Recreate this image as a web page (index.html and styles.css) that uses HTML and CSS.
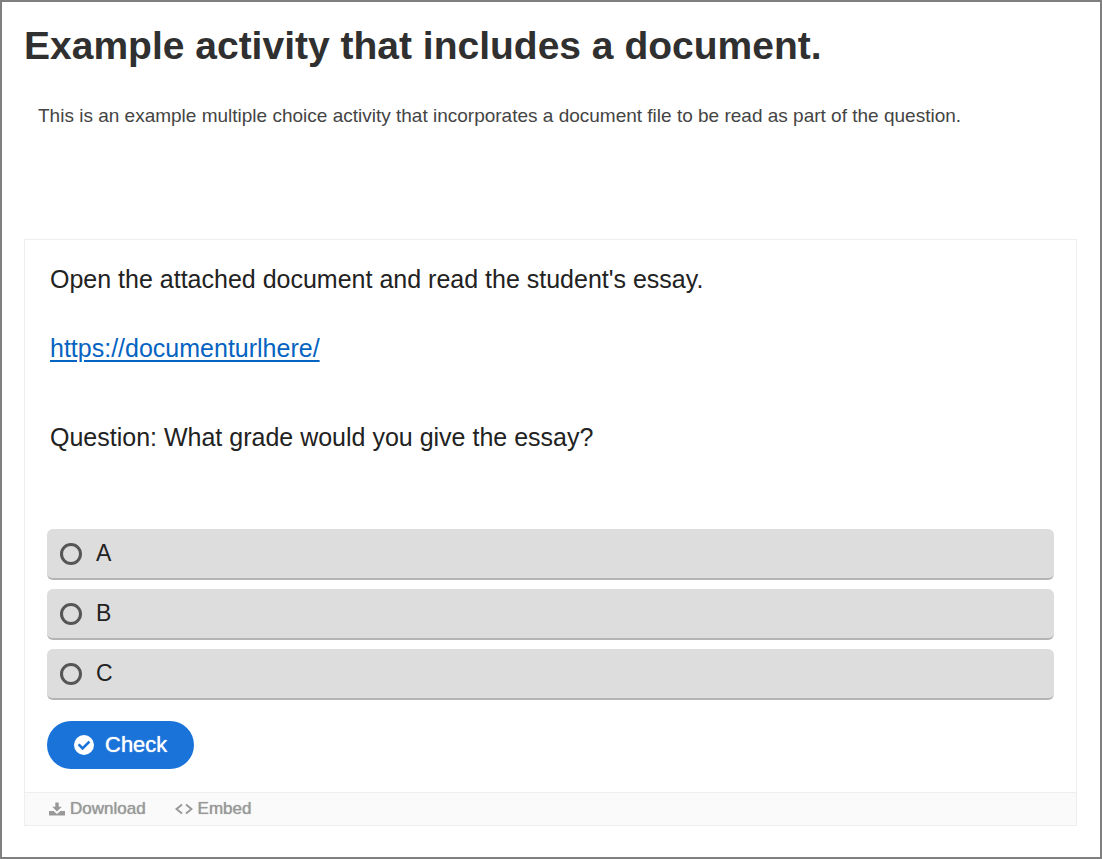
FILE: index.html
```html
<!DOCTYPE html>
<html lang="en">

<head>
    <meta charset="UTF-8">
    <meta name="viewport" content="width=device-width, initial-scale=1.0">
    <title>Example activity that includes a document.</title>
    <link rel="stylesheet" href="styles.css">
</head>

<body>
    <main class="page">
        <h1>Example activity that includes a document.</h1>
        <p class="intro">This is an example multiple choice activity that incorporates a document file to be read as part of the question.</p>

        <section class="activity">
            <form class="question" onsubmit="return false">
                <p class="task">Open the attached document and read the student's essay.</p>
                <p class="task-link"><a href="https://documenturlhere/">https://documenturlhere/</a></p>
                <p class="task" id="question-text">Question: What grade would you give the essay?</p>

                <div class="answers" role="radiogroup" aria-labelledby="question-text">
                    <label class="answer" for="answer-a">
                        <input type="radio" id="answer-a" name="grade" value="A">
                        <span>A</span>
                    </label>
                    <label class="answer" for="answer-b">
                        <input type="radio" id="answer-b" name="grade" value="B">
                        <span>B</span>
                    </label>
                    <label class="answer" for="answer-c">
                        <input type="radio" id="answer-c" name="grade" value="C">
                        <span>C</span>
                    </label>
                </div>

                <button type="submit" class="check-button">
                    <svg class="check-icon" viewBox="0 0 20 20" aria-hidden="true">
                        <circle cx="10" cy="10" r="10" fill="#fff" />
                        <path d="M4.6 9.4l4 4 6.8-6.8" fill="none" stroke="#1a73d9" stroke-width="2.6" />
                    </svg>
                    Check
                </button>
            </form>

            <div class="controls">
                <button type="button" class="control">
                    <svg class="control-icon" viewBox="0 0 16 14" aria-hidden="true">
                        <path d="M6.3 0.5h3.4v4.3h3.1L8 9.6 3.2 4.8h3.1z" />
                        <path d="M0 9h4.6L8 12l3.4-3H16v4.5H0z" />
                    </svg>
                    Download
                </button>
                <button type="button" class="control">
                    <svg class="control-icon embed-icon" viewBox="0 0 18 14" aria-hidden="true">
                        <path d="M7 2.5L1.5 7 7 11.5M11 2.5L16.5 7 11 11.5" />
                    </svg>
                    Embed
                </button>
            </div>
        </section>
    </main>
</body>

</html>
```

FILE: styles.css
```css
* {
    box-sizing: border-box;
    font-family: "Liberation Sans", Arial, sans-serif;
}

body {
    margin: 0;
    background-color: #fff;
}

.page {
    min-height: 100vh;
    padding: 20px 23px 30px 22px;
    border: 2px solid #7f7f7f;
}

h1 {
    margin: 0;
    color: #303030;
    font-size: 39px;
    line-height: 48px;
}

.intro {
    margin: 33px 14px 110px;
    color: #444;
    font-size: 19px;
    line-height: 26px;
}

.activity {
    border: 1px solid #eee;
}

.question {
    padding: 22px;
}

.task,
.task-link {
    margin: 0 3px;
    color: #222;
    font-size: 25px;
    line-height: 34px;
}

.task-link {
    margin-top: 35px;
    margin-bottom: 55px;
}

.task-link a {
    color: #0563c1;
    text-underline-offset: 3px;
    text-decoration-thickness: 2px;
}

.answers {
    display: flex;
    flex-direction: column;
    gap: 9px;
    margin: 75px 0 21px;
}

.answer {
    display: flex;
    align-items: center;
    gap: 14px;
    height: 51px;
    padding: 0 13px;
    border-bottom: 2px solid #b4b4b4;
    border-radius: 6px;
    background-color: #ddd;
    color: #222;
    font-size: 23px;
    cursor: pointer;
}

.answer input {
    appearance: none;
    width: 22px;
    height: 22px;
    margin: 0;
    border: 3px solid #555;
    border-radius: 50%;
}

.answer input:checked {
    background-color: #555;
    box-shadow: inset 0 0 0 3px #ddd;
}

.check-button {
    display: flex;
    align-items: center;
    gap: 11px;
    height: 48px;
    margin-bottom: 1px;
    padding: 0 27px;
    border: none;
    border-radius: 24px;
    background-color: #1a73d9;
    color: #fff;
    font-size: 22px;
    text-shadow: 0 0 1px #fff;
    cursor: pointer;
}

.check-icon {
    width: 20px;
    height: 20px;
}

.controls {
    display: flex;
    gap: 29px;
    padding: 0 24px;
    border-top: 1px solid #eee;
    background-color: #fafafa;
}

.control {
    display: flex;
    align-items: center;
    gap: 5px;
    height: 32px;
    padding: 0;
    border: none;
    background: none;
    color: #999;
    font-size: 17px;
    text-shadow: 0 0 1px #999;
    cursor: pointer;
}

.control-icon {
    width: 16px;
    height: 14px;
    fill: #999;
}

.embed-icon {
    width: 18px;
    fill: none;
    stroke: #999;
    stroke-width: 2;
}
```
